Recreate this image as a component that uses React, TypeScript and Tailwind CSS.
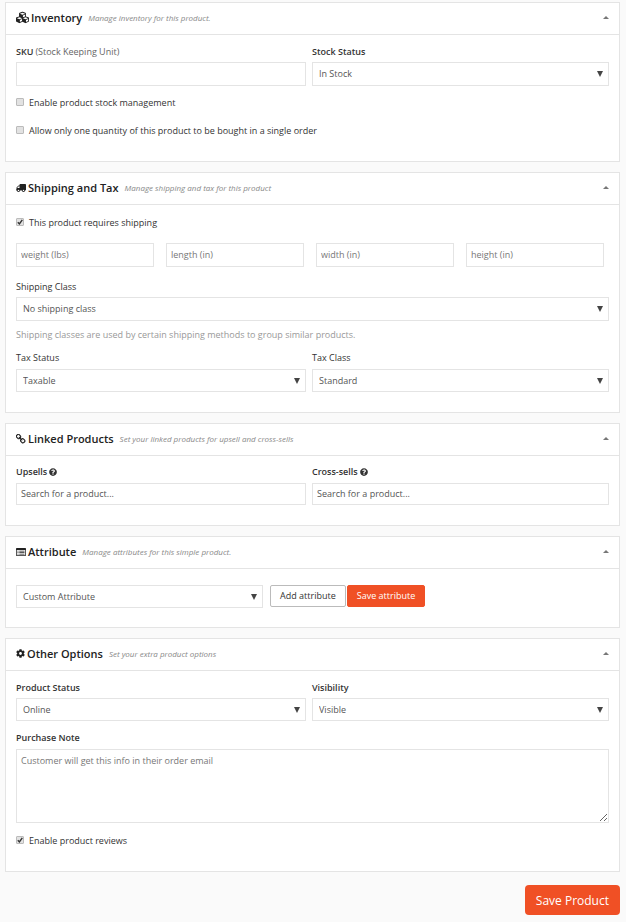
import { useId, useState, type ReactNode } from "react";
import { FaCog, FaCubes, FaQuestionCircle, FaTruck } from "react-icons/fa";

const fieldBorder = "border border-[#e4e4e4] bg-white";

function ListAltIcon() {
  return (
    <svg viewBox="0 0 20 16" className="h-2 w-2.5" fill="currentColor" aria-hidden="true">
      <path
        fillRule="evenodd"
        d="M1.500 0h17A1.500 1.500 0 0 1 20 1.500v13a1.500 1.500 0 0 1-1.500 1.500h-17A1.500 1.500 0 0 1 0 14.500v-13A1.500 1.500 0 0 1 1.500 0zM1.500 4v10.500h17V4z"
      />
      <path d="M3 5.500h2v1.600H3zM6.500 5.500H17v1.600H6.500zM3 8.500h2v1.600H3zM6.500 8.500H17v1.600H6.500zM3 11.500h2v1.600H3zM6.500 11.500H17v1.600H6.500z" />
    </svg>
  );
}

function ChainIcon() {
  return (
    <svg viewBox="64 64 1664 1664" className="size-2.5" fill="currentColor" aria-hidden="true">
      <path d="M1456 1216q0-40-28-68l-208-208q-28-28-68-28-42 0-72 32 3 3 19 18.500t21.500 21.500 15 19 13 25.500 3.500 27.500q0 40-28 68t-68 28q-15 0-27.500-3.500t-25.500-13-19-15-21.500-21.500-18.500-19q-33 31-33 73 0 40 28 68l206 207q27 27 68 27 40 0 68-26l147-146q28-28 28-67zm-703-705q0-40-28-68l-206-207q-28-28-68-28-39 0-68 27l-147 146q-28 28-28 67 0 40 28 68l208 208q27 27 68 27 42 0 72-31-3-3-19-18.500t-21.500-21.500-15-19-13-25.500-3.500-27.500q0-40 28-68t68-28q15 0 27.500 3.500t25.500 13 19 15 21.500 21.500 18.500 19q33-31 33-73zm895 705q0 120-85 203l-147 146q-83 83-203 83-121 0-204-85l-206-207q-83-83-83-203 0-123 88-209l-88-88q-86 88-208 88-120 0-204-84l-208-208q-84-84-84-204t85-203l147-146q83-83 203-83 121 0 204 85l206 207q83 83 83 203 0 123-88 209l88 88q86-88 208-88 120 0 204 84l208 208q84 84 84 204z" />
    </svg>
  );
}

type PanelProps = {
  icon: ReactNode;
  title: string;
  hint: string;
  children: ReactNode;
};

function Panel({ icon, title, hint, children }: PanelProps) {
  const [open, setOpen] = useState(true);
  return (
    <section className="border border-[#e4e4e4] bg-white">
      <header className="flex h-8 items-center border-b border-[#e4e4e4] px-2.5 pb-0.5 text-[#222]">
        <span className="mr-0.5 flex items-center">{icon}</span>
        <h2 className="text-[11px] leading-4 font-semibold">{title}</h2>
        <span className="ml-1.5 text-[8px] leading-4 text-[#888] italic">{hint}</span>
        <button
          type="button"
          aria-label={`Toggle ${title}`}
          aria-expanded={open}
          onClick={() => setOpen(!open)}
          className="ml-auto flex h-4 items-center"
        >
          <svg viewBox="0 0 6 3" className={open ? "h-[3px] w-1.5" : "h-[3px] w-1.5 rotate-180"} aria-hidden="true">
            <path d="M3 0l3 3H0z" fill="#777" />
          </svg>
        </button>
      </header>
      {open && children}
    </section>
  );
}

type SelectProps = { id?: string; label?: string; options: string[]; size?: "tall" | "short" };

function Select({ id, label, options, size = "short" }: SelectProps) {
  return (
    <div className="relative">
      <select
        id={id}
        aria-label={label}
        className={`${fieldBorder} block w-full appearance-none pr-4 pl-1.5 text-[9px] text-[#555] ${
          size === "tall" ? "h-6" : "h-[23px]"
        }`}
      >
        {options.map((o) => (
          <option key={o}>{o}</option>
        ))}
      </select>
      <svg
        viewBox="0 0 6 6"
        className="pointer-events-none absolute inset-y-0 right-1.5 my-auto size-1.5"
        aria-hidden="true"
      >
        <path d="M0 0h6L3 6z" fill="#444" />
      </svg>
    </div>
  );
}

type CheckProps = { label: string; checked?: boolean };

function Check({ label, checked = false }: CheckProps) {
  return (
    <label className="flex h-7 items-center gap-[5px] text-[9px] text-[#333]">
      <span className="relative mb-0.5 flex">
        <input
          type="checkbox"
          defaultChecked={checked}
          className="peer size-2 appearance-none rounded-[1px] border border-[#bbb] bg-[#e2e2e2]"
        />
        <svg
          viewBox="0 0 8 8"
          className="pointer-events-none absolute inset-0 hidden size-2 peer-checked:block"
          aria-hidden="true"
        >
          <path d="M1.800 4.200L3.400 5.900L6.300 1.800" fill="none" stroke="#333" strokeWidth="1.400" />
        </svg>
      </span>
      {label}
    </label>
  );
}

type FieldProps = {
  label: string;
  bold?: boolean;
  note?: string;
  help?: boolean;
  gap?: "near" | "far";
  children: (id: string) => ReactNode;
};

function Field({ label, bold = false, note, help = false, gap = "near", children }: FieldProps) {
  const id = useId();
  return (
    <div>
      <label
        htmlFor={id}
        className={`flex h-4 items-center gap-0.5 text-[9px] text-[#333] ${gap === "near" ? "mb-0.5" : "mb-[3px]"}`}
      >
        <span className={bold ? "font-semibold" : "font-normal"}>{label}</span>
        {note && <span className="text-[#666]">{note}</span>}
        {help && <FaQuestionCircle className="size-2" />}
      </label>
      {children(id)}
    </div>
  );
}

function ProductSearch({ id }: { id: string }) {
  return (
    <input
      id={id}
      type="text"
      placeholder="Search for a product..."
      className={`${fieldBorder} block h-[22px] w-full px-1 pb-0.5 text-[9px] placeholder:text-[#555]`}
    />
  );
}

function Columns({ children }: { children: ReactNode }) {
  return <div className="grid grid-cols-[290fr_297fr] gap-1.5">{children}</div>;
}

export default function App() {
  return (
    <form
      onSubmit={(e) => e.preventDefault()}
      className="min-h-screen bg-[#fafafa] pt-0.5 pr-1.5 pb-[7px] pl-[5px] font-['Open_Sans',sans-serif] leading-4"
    >
      <div className="flex flex-col gap-2.5">
        <Panel
          icon={<FaCubes className="size-[13px]" />}
          title="Inventory"
          hint="Manage inventory for this product."
        >
          <div className="px-2.5 pt-[9px] pb-4">
            <Columns>
              <Field label="SKU" bold note="(Stock Keeping Unit)">
                {(id) => <input id={id} type="text" className={`${fieldBorder} block h-6 w-full px-1 text-[9px]`} />}
              </Field>
              <Field label="Stock Status" bold>
                {(id) => <Select id={id} size="tall" options={["In Stock", "Out of Stock"]} />}
              </Field>
            </Columns>
            <div className="mt-[3px]">
              <Check label="Enable product stock management" />
              <Check label="Allow only one quantity of this product to be bought in a single order" />
            </div>
          </div>
        </Panel>

        <Panel
          icon={<FaTruck className="size-2.5 -scale-x-100" />}
          title="Shipping and Tax"
          hint="Manage shipping and tax for this product"
        >
          <div className="px-2.5 pt-1 pb-5">
            <Check label="This product requires shipping" checked />
            <div className="mt-1.5 mr-[5px] grid grid-cols-4 gap-3">
              {["weight (lbs)", "length (in)", "width (in)", "height (in)"].map((name) => (
                <input
                  key={name}
                  type="text"
                  aria-label={name}
                  placeholder={name}
                  className={`${fieldBorder} h-6 w-full px-1 pb-0.5 text-[9px] placeholder:text-[#777]`}
                />
              ))}
            </div>
            <div className="mt-3">
              <Field label="Shipping Class">
                {(id) => <Select id={id} size="tall" options={["No shipping class"]} />}
              </Field>
            </div>
            <p className="mt-1.5 mb-[7px] text-[9px] leading-4 text-[#999]">
              Shipping classes are used by certain shipping methods to group similar products.
            </p>
            <Columns>
              <Field label="Tax Status" gap="far">
                {(id) => <Select id={id} options={["Taxable", "Shipping only", "None"]} />}
              </Field>
              <Field label="Tax Class" gap="far">
                {(id) => <Select id={id} options={["Standard"]} />}
              </Field>
            </Columns>
          </div>
        </Panel>

        <Panel icon={<ChainIcon />} title="Linked Products" hint="Set your linked products for upsell and cross-sells">
          <div className="px-2.5 pt-2 pb-5">
            <Columns>
              <Field label="Upsells" bold help gap="far">
                {(id) => <ProductSearch id={id} />}
              </Field>
              <Field label="Cross-sells" bold help gap="far">
                {(id) => <ProductSearch id={id} />}
              </Field>
            </Columns>
          </div>
        </Panel>

        <Panel icon={<ListAltIcon />} title="Attribute" hint="Manage attributes for this simple product.">
          <div className="flex items-start px-2.5 pt-4 pb-[19px]">
            <div className="w-5/12">
              <Select label="Attribute" options={["Custom Attribute"]} />
            </div>
            <button
              type="button"
              className="ml-[7px] h-[22px] rounded-xs border border-[#bbb] bg-white px-[9px] text-[9px] text-[#333]"
            >
              Add attribute
            </button>
            <button
              type="button"
              className="ml-px h-[22px] rounded-xs border border-[#f05025] bg-[#f05025] px-[9px] text-[9px] text-white"
            >
              Save attribute
            </button>
          </div>
        </Panel>

        <Panel icon={<FaCog className="size-[9px]" />} title="Other Options" hint="Set your extra product options">
          <div className="px-2.5 pt-[9px] pb-4">
            <Columns>
              <Field label="Product Status" bold>
                {(id) => <Select id={id} options={["Online", "Draft"]} />}
              </Field>
              <Field label="Visibility" bold>
                {(id) => <Select id={id} options={["Visible", "Hidden"]} />}
              </Field>
            </Columns>
            <div className="mt-[9px] mb-1">
              <Field label="Purchase Note" bold gap="far">
                {(id) => (
                  <textarea
                    id={id}
                    placeholder="Customer will get this info in their order email"
                    className={`${fieldBorder} block h-[74px] w-full resize px-1 py-[3px] text-[9px] leading-4 placeholder:text-[#777]`}
                  />
                )}
              </Field>
            </div>
            <Check label="Enable product reviews" checked />
          </div>
        </Panel>
      </div>

      <div className="mt-[13px] flex justify-end">
        <button type="submit" className="h-[30px] rounded bg-[#f05025] px-[11px] pt-0.5 text-xs text-white">
          Save Product
        </button>
      </div>
    </form>
  );
}
